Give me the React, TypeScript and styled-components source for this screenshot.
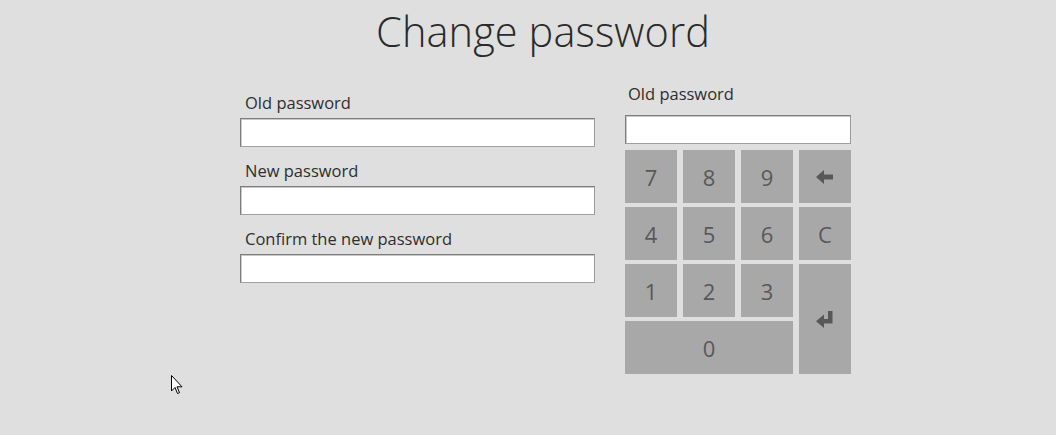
import React from "react";
import styled, { createGlobalStyle } from "styled-components";

const Global = createGlobalStyle`
  html, body { margin: 0; padding: 0; background: #dfdfdf; }
  body { font-family: "Open Sans", "Liberation Sans", sans-serif; color: #2b2b2b; }
`;

const Page = styled.div`
  position: relative;
  width: 1056px;
  height: 435px;
  background: #dfdfdf;
  overflow: hidden;
`;

const Title = styled.h1`
  margin: 0;
  padding-top: 4px;
  padding-left: 30px;
  text-align: center;
  font-family: "Open Sans", sans-serif;
  font-weight: 300;
  font-size: 41.5px;
  line-height: 54px;
  color: #2a2a2a;
  letter-spacing: 0.1px;
`;

const Content = styled.div`
  display: flex;
  align-items: flex-start;
  gap: 30px;
  padding-left: 240px;
  margin-top: 24px;
`;

const Form = styled.div`
  width: 355px;
  display: flex;
  flex-direction: column;
  padding-top: 9px;
`;

const Field = styled.div`
  display: flex;
  flex-direction: column;
  margin-bottom: 12px;
`;

const Label = styled.label`
  font-size: 16.5px;
  line-height: 24px;
  color: #2e2e2e;
  padding-left: 5px;
  margin-bottom: 3px;
`;

const Input = styled.div<{ $w: number }>`
  box-sizing: border-box;
  width: ${(p) => p.$w}px;
  height: 29px;
  background: #ffffff;
  border: 1px solid #7d7d7d;
  border-right-color: #9a9a9a;
  border-bottom-color: #a0a0a0;
  box-shadow: inset 1px 1px 0 #c8c8c8;
`;

const Pad = styled.div`
  width: 226px;
  display: flex;
  flex-direction: column;
`;

const PadLabel = styled(Label)`
  padding-left: 3px;
  margin-bottom: 9px;
`;

const Keys = styled.div`
  margin-top: 6px;
  display: grid;
  grid-template-columns: repeat(4, 52px);
  grid-auto-rows: 53px;
  column-gap: 6px;
  row-gap: 4px;
`;

const Key = styled.div<{ $span?: number; $rows?: number }>`
  background: #a8a8a8;
  grid-column: span ${(p) => p.$span || 1};
  grid-row: span ${(p) => p.$rows || 1};
  display: flex;
  align-items: center;
  justify-content: center;
  font-size: 22px;
  font-weight: 500;
  color: #585858;
  font-family: "Open Sans", sans-serif;
`;

const Cursor = styled.svg`
  position: absolute;
  left: 171px;
  top: 375px;
`;

const ArrowLeft = () => (
  <svg width="18" height="14" viewBox="0 0 18 14">
    <path d="M0 7 L8 0 L8 4.5 L17 4.5 L17 9.5 L8 9.5 L8 14 Z" fill="#585858" />
  </svg>
);

const EnterIcon = () => (
  <svg width="18" height="17" viewBox="0 0 18 17">
    <path d="M12 0 L16.5 0 L16.5 12.5 L8 12.5 L8 17 L0 10.25 L8 3.5 L8 8 L12 8 Z" fill="#585858" />
  </svg>
);

export default function App() {
  return (
    <Page>
      <Global />
      <Title>Change password</Title>
      <Content>
        <Form>
          <Field>
            <Label>Old password</Label>
            <Input $w={355} />
          </Field>
          <Field>
            <Label>New password</Label>
            <Input $w={355} />
          </Field>
          <Field>
            <Label>Confirm the new password</Label>
            <Input $w={355} />
          </Field>
        </Form>
        <Pad>
          <PadLabel>Old password</PadLabel>
          <Input $w={226} />
          <Keys>
            <Key>7</Key>
            <Key>8</Key>
            <Key>9</Key>
            <Key><ArrowLeft /></Key>
            <Key>4</Key>
            <Key>5</Key>
            <Key>6</Key>
            <Key>C</Key>
            <Key>1</Key>
            <Key>2</Key>
            <Key>3</Key>
            <Key $rows={2}><EnterIcon /></Key>
            <Key $span={3}>0</Key>
          </Keys>
        </Pad>
      </Content>
      <Cursor width="13" height="20" viewBox="0 0 13 20">
        <path d="M0.5 0.5 L0.5 16 L4 12.5 L6.5 18.5 L8.5 17.7 L6 11.8 L11 11.8 Z" fill="#ffffff" stroke="#000" strokeWidth="1" />
      </Cursor>
    </Page>
  );
}
